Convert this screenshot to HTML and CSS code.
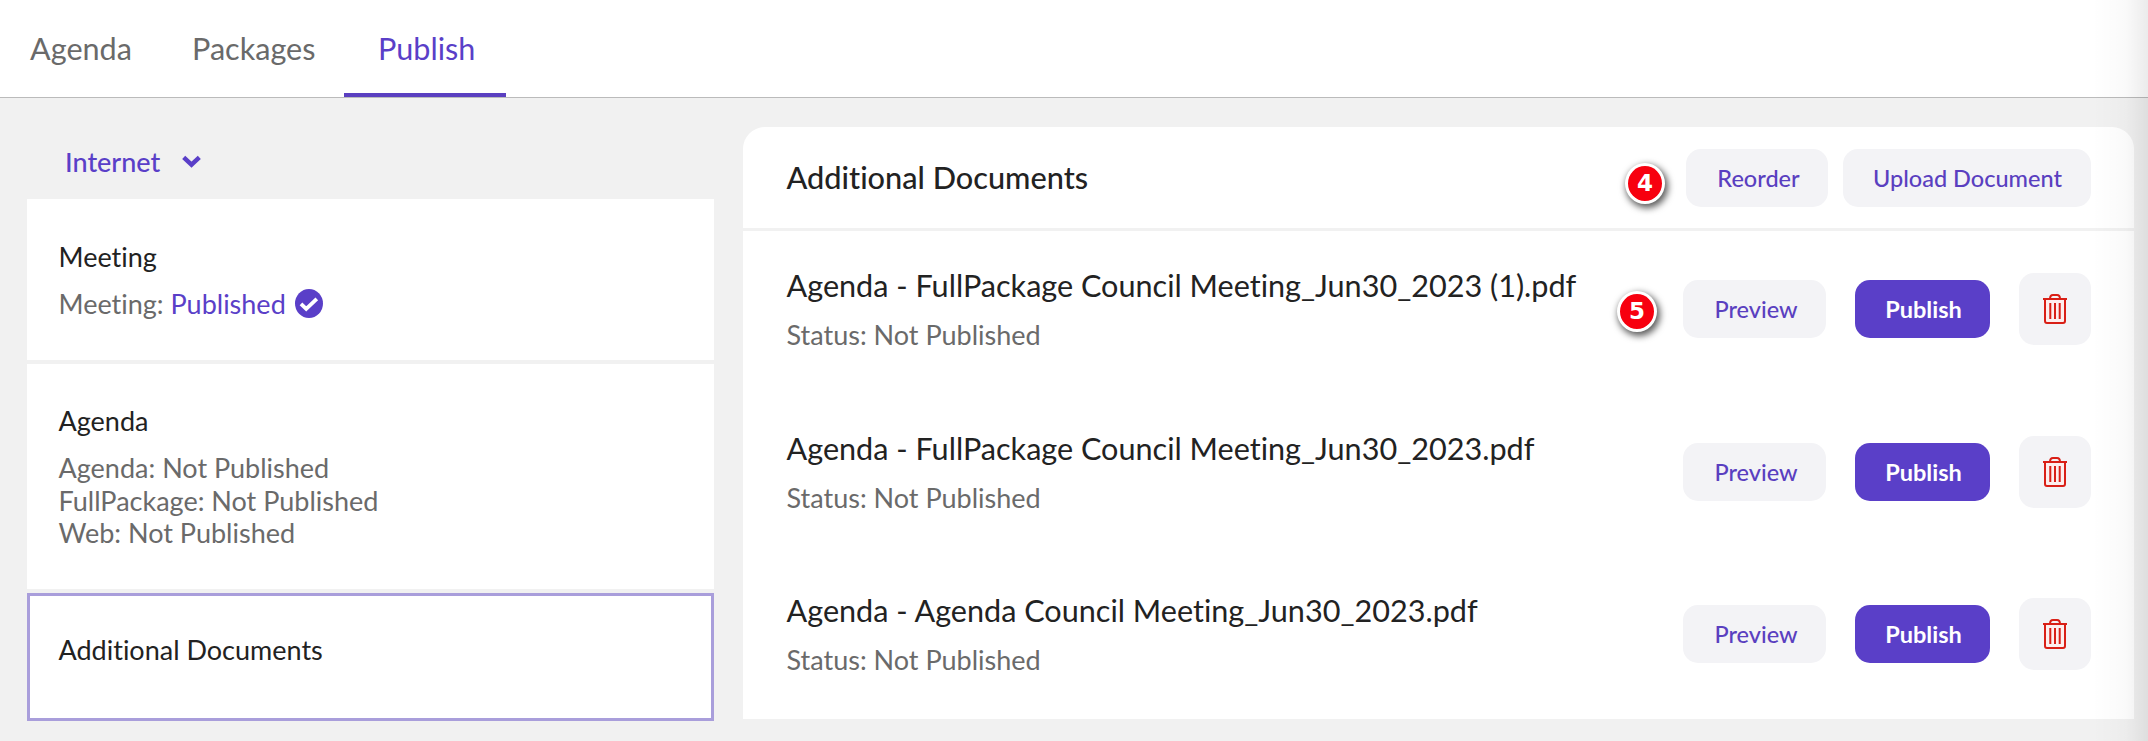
FILE: index.html
```
<!DOCTYPE html>
<html lang="en">
<head>
    <meta charset="UTF-8">
    <title>Publish</title>
    <link rel="stylesheet" href="styles.css">
</head>
<body>

    <!-- Shared trash icon -->
    <svg class="sprite" xmlns="http://www.w3.org/2000/svg">
        <symbol id="trash" viewBox="0 0 24 30">
            <path d="M2 5.500V27a2 2 0 0 0 2 2h16a2 2 0 0 0 2-2V5.500z" fill="#fdeeee" stroke="none"/>
            <path d="M0 5h24M2 5v22a2 2 0 0 0 2 2h16a2 2 0 0 0 2-2V5M7 5c0-2.700 1.200-4 3-4h4c1.800 0 3 1.300 3 4M7.300 9v16M12 9v16M16.700 9v16"/>
        </symbol>
    </svg>

    <nav class="tabs">
        <a class="tab tab-agenda">Agenda</a>
        <a class="tab tab-packages">Packages</a>
        <a class="tab active">Publish</a>
    </nav>

    <main class="content">
        <aside class="sidebar">
            <div class="channel">
                <span>Internet</span>
                <svg class="chevron" viewBox="0 0 18 12"><path d="M1.600 2L9 9l7.400-7"/></svg>
            </div>

            <div class="card card-meeting">
                <h3>Meeting</h3>
                <p>Meeting: <span class="published">Published</span>
                    <svg class="check" viewBox="0 0 28 29">
                        <ellipse cx="14" cy="14.500" rx="14" ry="14.500"/>
                        <path d="M6 14.800l5.200 5L21.800 9.800"/>
                    </svg>
                </p>
            </div>

            <div class="card card-agenda">
                <h3>Agenda</h3>
                <p>Agenda: Not Published</p>
                <p>FullPackage: Not Published</p>
                <p>Web: Not Published</p>
            </div>

            <div class="card card-docs selected">
                <h3>Additional Documents</h3>
            </div>
        </aside>

        <section class="panel">
            <header class="panel-header">
                <h2>Additional Documents</h2>
                <div class="header-actions">
                    <span class="badge badge-header">4</span>
                    <button class="btn btn-reorder">Reorder</button>
                    <button class="btn btn-upload">Upload Document</button>
                </div>
            </header>

            <div class="doc">
                <div class="doc-info">
                    <div class="doc-name">Agenda - FullPackage Council Meeting_Jun30_2023 (1).pdf</div>
                    <div class="doc-status">Status: Not Published</div>
                </div>
                <div class="doc-actions">
                    <span class="badge badge-row">5</span>
                    <button class="btn btn-preview">Preview</button>
                    <button class="btn btn-publish">Publish</button>
                    <button class="btn btn-delete"><svg class="trash"><use href="#trash"/></svg></button>
                </div>
            </div>

            <div class="doc">
                <div class="doc-info">
                    <div class="doc-name">Agenda - FullPackage Council Meeting_Jun30_2023.pdf</div>
                    <div class="doc-status">Status: Not Published</div>
                </div>
                <div class="doc-actions">
                    <button class="btn btn-preview">Preview</button>
                    <button class="btn btn-publish">Publish</button>
                    <button class="btn btn-delete"><svg class="trash"><use href="#trash"/></svg></button>
                </div>
            </div>

            <div class="doc">
                <div class="doc-info">
                    <div class="doc-name">Agenda - Agenda Council Meeting_Jun30_2023.pdf</div>
                    <div class="doc-status">Status: Not Published</div>
                </div>
                <div class="doc-actions">
                    <button class="btn btn-preview">Preview</button>
                    <button class="btn btn-publish">Publish</button>
                    <button class="btn btn-delete"><svg class="trash"><use href="#trash"/></svg></button>
                </div>
            </div>
        </section>
    </main>

    <div class="edge-shadow"></div>

</body>
</html>
```
FILE: styles.css
```
* {
    box-sizing: border-box;
    margin: 0;
    padding: 0;
}
body {
    font-family: Lato, sans-serif;
    font-variant-ligatures: none;
    background: #f1f1f1;
    color: #222;
    height: 741px;
    position: relative;
    overflow: hidden;
}
.sprite {
    display: none;
}

/* Tabs */
.tabs {
    display: flex;
    height: 98px;
    background: #fff;
    border-bottom: 1px solid #bbb;
}
.tab {
    line-height: 97px;
    font-size: 30.6px;
    color: #6a6a6a;
}
.tab-agenda {
    width: 163px;
    padding-left: 30px;
}
.tab-packages {
    width: 181px;
    padding-left: 29px;
}
.tab.active {
    width: 162px;
    padding-left: 34px;
    color: #5a3fc8;
    box-shadow: inset 0 -4px #5a3fc0;
}

.content {
    display: flex;
    align-items: flex-start;
    gap: 29px;
    padding-left: 27px;
}

/* Left side */
.sidebar {
    width: 687px;
    display: flex;
    flex-direction: column;
    gap: 4px;
}
.channel {
    display: flex;
    align-items: center;
    gap: 22px;
    height: 97px;
    padding: 30px 0 1px 38px;
    font-size: 27px;
    font-weight: 500;
    color: #5a3fc8;
}
.chevron {
    width: 19px;
    height: 13px;
    fill: none;
    stroke: #5a3fc8;
    stroke-width: 4.2;
}
.card {
    background: #fff;
    padding: 41px 32px 0 31.5px;
    font-size: 27px;
    line-height: 32.5px;
}
.card h3 {
    font-size: 27px;
    font-weight: 400;
    margin-bottom: 14.5px;
}
.card p {
    color: #6a6a6a;
}
.card-meeting {
    height: 161px;
    padding-top: 42px;
}
.card-agenda {
    height: 225px;
}
.card-docs {
    height: 128px;
}
.card.selected {
    padding: 38px 29px 0 28.5px;
    border: 3px solid #a99edb;
}
.published {
    color: #5a3fc8;
}
.check {
    width: 28px;
    height: 29px;
    margin-left: 2px;
    vertical-align: -4px;
    fill: #5a3fc8;
}
.check path {
    fill: none;
    stroke: #fff;
    stroke-width: 3.8;
}

/* Right side */
.panel {
    width: 1391px;
    height: 592px;
    margin-top: 29px;
    background: #fff;
    border-radius: 22px 22px 0 0;
}
.panel-header {
    display: flex;
    align-items: center;
    justify-content: space-between;
    height: 104px;
    padding: 0 43px 0 43.5px;
    border-bottom: 3px solid #f1f1f1;
}
.panel-header h2 {
    font-size: 30.7px;
    font-weight: 500;
    padding-bottom: 1px;
}
.header-actions,
.doc-actions {
    position: relative;
    display: flex;
    align-items: center;
}
.header-actions {
    gap: 15px;
}
.doc {
    display: flex;
    justify-content: space-between;
    height: 162.5px;
    padding: 36px 43px 0 43.5px;
}
.doc-name {
    padding-top: 1px;
    font-size: 30.6px;
    line-height: 36px;
    white-space: nowrap;
}
.doc-status {
    margin-top: 15px;
    font-size: 27px;
    line-height: 32px;
    color: #6a6a6a;
}
.doc-actions {
    height: 72px;
    margin-top: 6px;
    gap: 29px;
}
.btn {
    height: 58px;
    padding-left: 3px;
    border: none;
    border-radius: 15px;
    background: #f3f3f6;
    color: #5a3fc0;
    font-family: inherit;
    font-size: 23.5px;
    font-weight: 500;
    white-space: nowrap;
}
.btn-reorder {
    width: 142px;
}
.btn-upload {
    width: 248px;
    padding-left: 1px;
}
.btn-preview {
    width: 143px;
}
.btn-publish {
    width: 135px;
    padding-left: 2px;
    background: #5a3fc8;
    color: #fff;
    font-weight: 700;
}
.btn-delete {
    width: 72px;
    height: 72px;
    padding: 0;
}
.trash {
    display: block;
    width: 24px;
    height: 30px;
    margin: 0 auto;
    fill: none;
    stroke: #d91f16;
    stroke-width: 2;
}

/* Numbered markers sitting beside the buttons */
.badge {
    position: absolute;
    width: 40px;
    height: 41px;
    border: 3px solid #fff;
    border-radius: 50%;
    background: #f7000f;
    color: #fff;
    box-shadow: 2px 3px 7px 1px rgba(0, 0, 0, 0.65);
    font: bold 23px/35px "DejaVu Sans", sans-serif;
    text-align: center;
}
.badge-header {
    left: -61px;
    top: 14px;
}
.badge-row {
    left: -66px;
    top: 18px;
}

.edge-shadow {
    position: absolute;
    top: 0;
    right: 0;
    width: 56px;
    height: 741px;
    background: linear-gradient(to right, transparent, rgba(0, 0, 0, 0.02) 60%, rgba(0, 0, 0, 0.08));
}
```
